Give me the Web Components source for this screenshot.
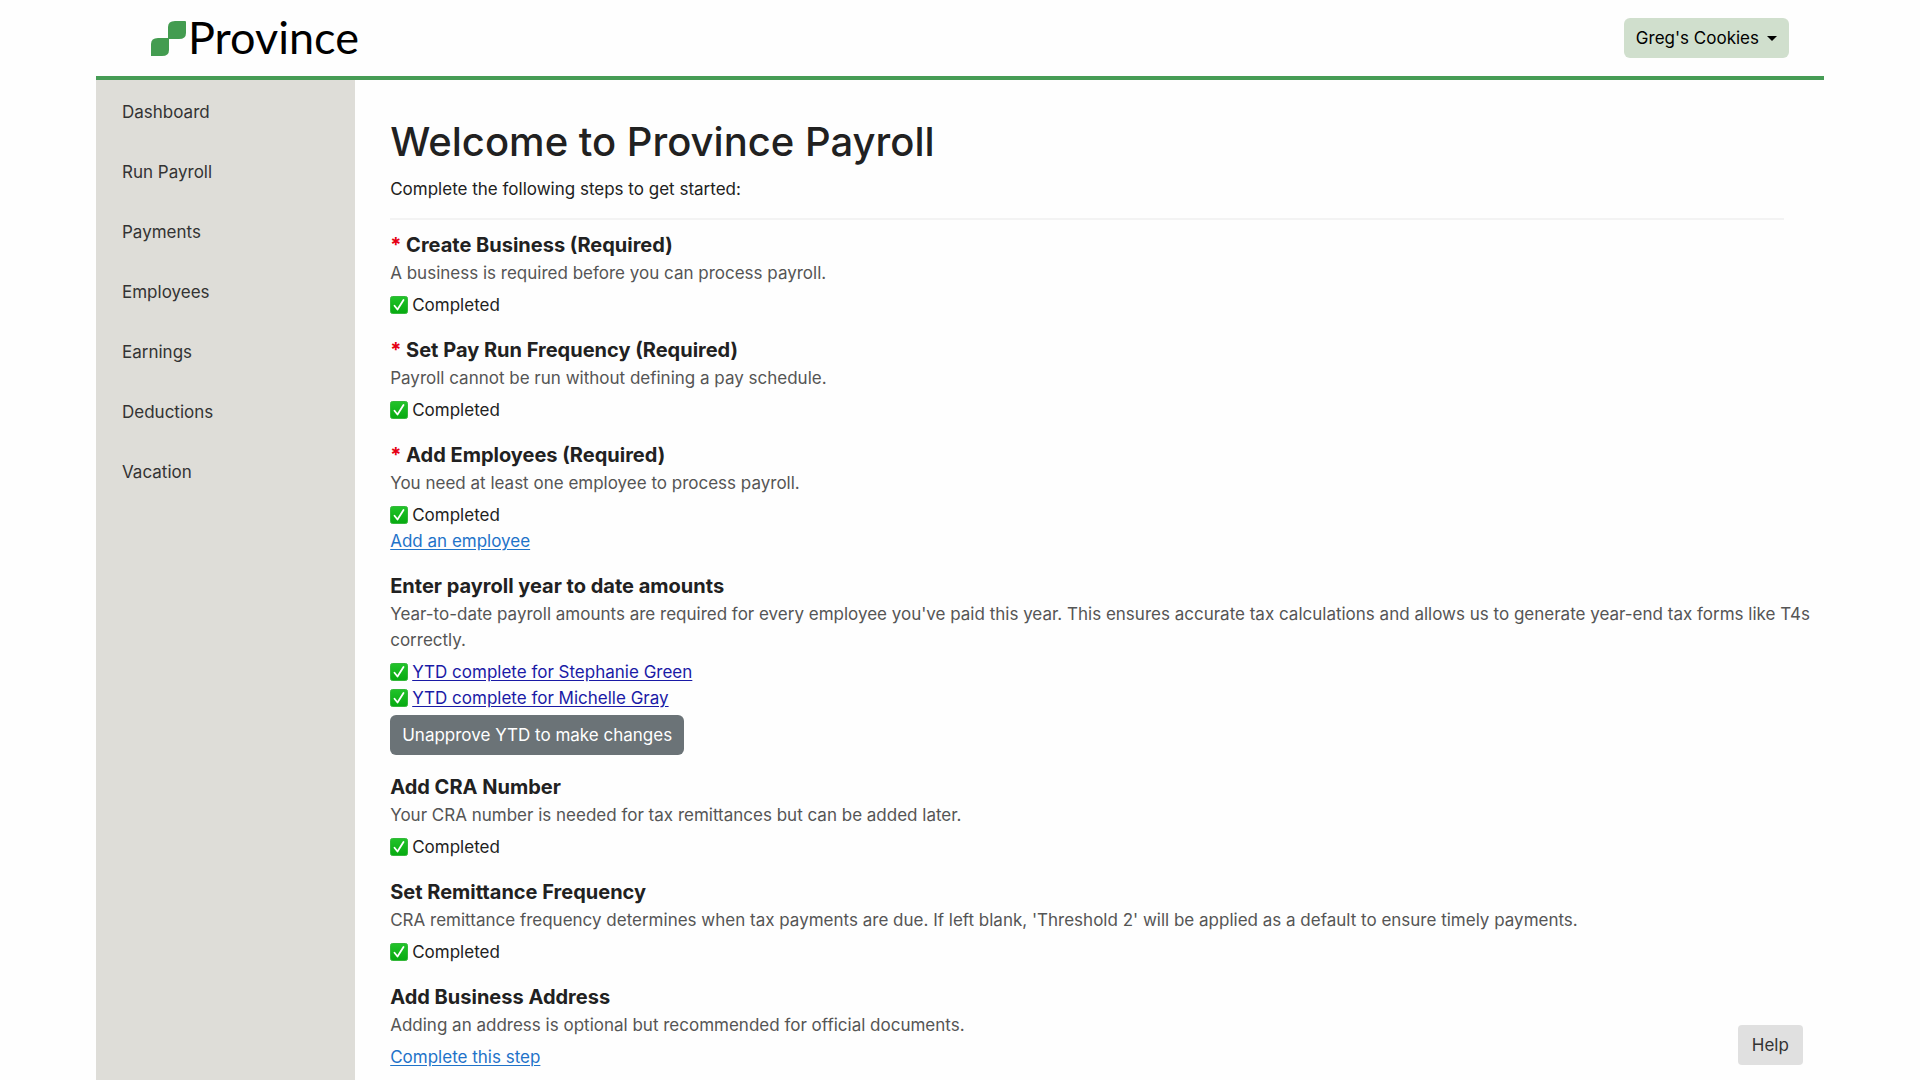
<!DOCTYPE html>
<html lang="en">
<head>
<meta charset="utf-8">
<meta name="viewport" content="width=device-width, initial-scale=1">
<title>Province Payroll</title>
<style>
  body {
    margin: 0;
    background: #fefefe;
    color: #212121;
    font-family: Inter, "Liberation Sans", sans-serif;
    font-size: 17px;
    line-height: 26px;
  }
</style>
</head>
<body>

<payroll-app>
  <app-header slot="header" account="Greg's Cookies"></app-header>
  <side-nav slot="nav">
    <nav-item href="#dashboard">Dashboard</nav-item>
    <nav-item href="#run">Run Payroll</nav-item>
    <nav-item href="#payments">Payments</nav-item>
    <nav-item href="#employees">Employees</nav-item>
    <nav-item href="#earnings">Earnings</nav-item>
    <nav-item href="#deductions">Deductions</nav-item>
    <nav-item href="#vacation">Vacation</nav-item>
  </side-nav>

  <page-intro>
    <span slot="title">Welcome to Province Payroll</span>
    Complete the following steps to get started:
  </page-intro>

  <setup-step heading="Create Business (Required)" required>
    <span slot="text">A business is required before you can process payroll.</span>
    <step-done>Completed</step-done>
  </setup-step>

  <setup-step heading="Set Pay Run Frequency (Required)" required>
    <span slot="text">Payroll cannot be run without defining a pay schedule.</span>
    <step-done>Completed</step-done>
  </setup-step>

  <setup-step heading="Add Employees (Required)" required>
    <span slot="text">You need at least one employee to process payroll.</span>
    <step-done>Completed</step-done>
    <text-link href="#add-employee">Add an employee</text-link>
  </setup-step>

  <setup-step heading="Enter payroll year to date amounts">
    <span slot="text">Year-to-date payroll amounts are required for every employee you've paid this year. This ensures accurate tax calculations and allows us to generate year-end tax forms like T4s correctly.</span>
    <step-done><text-link href="#ytd-1" seen>YTD complete for Stephanie Green</text-link></step-done>
    <step-done><text-link href="#ytd-2" seen>YTD complete for Michelle Gray</text-link></step-done>
    <app-button slot="action" kind="secondary">Unapprove YTD to make changes</app-button>
  </setup-step>

  <setup-step heading="Add CRA Number">
    <span slot="text">Your CRA number is needed for tax remittances but can be added later.</span>
    <step-done>Completed</step-done>
  </setup-step>

  <setup-step heading="Set Remittance Frequency">
    <span slot="text">CRA remittance frequency determines when tax payments are due. If left blank, 'Threshold 2' will be applied as a default to ensure timely payments.</span>
    <step-done>Completed</step-done>
  </setup-step>

  <setup-step heading="Add Business Address">
    <span slot="text">Adding an address is optional but recommended for official documents.</span>
    <text-link href="#address">Complete this step</text-link>
  </setup-step>

  <app-button slot="help" kind="help">Help</app-button>
</payroll-app>

<script>
function define(name, html, setup) {
  const tpl = document.createElement('template');
  tpl.innerHTML = html;

  customElements.define(name, class extends HTMLElement {
    constructor() {
      super();
      this.attachShadow({ mode: 'open' }).appendChild(tpl.content.cloneNode(true));
    }

    connectedCallback() {
      if (setup) setup(this, this.shadowRoot);
    }
  });
}

define('payroll-app', `
  <style>
    :host {
      display: flex;
      flex-direction: column;
      width: 90%;
      height: 100vh;
      margin: 0 auto;
    }

    .body {
      display: flex;
      flex: 1;
      min-height: 0;
    }

    aside {
      flex: 0 0 15%;
      background: #deddd8;
    }

    main {
      flex: 1;
      min-width: 0;
      overflow: hidden;
      padding: 36px 10px 0 35px;
    }

    /* stays in the corner over the step list */
    .help {
      position: fixed;
      right: 6.1%;
      bottom: 15px;
    }
  </style>

  <slot name="header"></slot>
  <div class="body">
    <aside><slot name="nav"></slot></aside>
    <main><slot></slot></main>
  </div>
  <div class="help"><slot name="help"></slot></div>
`);

define('app-header', `
  <style>
    :host {
      display: block;
      border-bottom: 4px solid #469c55;
    }

    header {
      display: flex;
      align-items: center;
      justify-content: space-between;
      height: 76px;
      padding: 0 35px 0 55px;
    }

    .logo {
      display: flex;
      align-items: center;
      gap: 2px;
      color: #000;
      font: 400 45px/46px Lato, "Liberation Sans", sans-serif;
      text-decoration: none;
    }

    .logo span { padding-bottom: 2px; }
  </style>

  <header>
    <a class="logo" href="#home">
      <svg width="35" height="35" viewBox="0 0 35 35" fill="#439c50" aria-hidden="true">
        <path d="M17 18V6Q17 0 24 0H34Q35 0 35 1V12Q35 18 28 18Z"/>
        <path d="M18 17V29Q18 35 11 35H0V23Q0 17 7 17Z"/>
      </svg>
      <span>Province</span>
    </a>
    <app-button kind="account" caret></app-button>
  </header>
`, (el, root) => {
  root.querySelector('app-button').textContent = el.getAttribute('account');
});

define('app-button', `
  <style>
    :host { display: inline-block; }

    button {
      display: flex;
      align-items: center;
      gap: 8px;
      padding: 7px 12px;
      border: 0;
      border-radius: 6px;
      font: inherit;
      cursor: pointer;
    }

    :host([kind="account"]) button { background: #d0dfcd; color: #000; }
    :host([kind="secondary"]) button { background: #6b7377; color: #fff; }
    :host([kind="help"]) button { background: #e0e0e0; color: #333; padding: 7px 14px; border-radius: 4px; }

    svg { display: none; }
    :host([caret]) svg { display: block; }
  </style>

  <button type="button">
    <slot></slot>
    <svg width="10" height="5" viewBox="0 0 10 5" aria-hidden="true"><path d="M0 0h10L5 5z"/></svg>
  </button>
`);

define('side-nav', `
  <style>
    :host { display: block; }

    nav {
      display: flex;
      flex-direction: column;
      gap: 8px;
      padding-top: 6px;
    }
  </style>
  <nav><slot></slot></nav>
`);

define('nav-item', `
  <style>
    :host { display: block; }

    a {
      display: block;
      padding: 13px 26px;
      color: #333;
      text-decoration: none;
    }
  </style>
  <a><slot></slot></a>
`, (el, root) => {
  root.querySelector('a').href = el.getAttribute('href');
});

define('page-intro', `
  <style>
    :host {
      display: block;
      margin: 0 30px 12px 0;
      padding-bottom: 16px;
      border-bottom: 2px solid #f3f3f3;
    }

    h1 {
      margin: 0 0 8px;
      font-size: 40px;
      font-weight: 500;
      line-height: 52px;
    }

    p { margin: 0; }
  </style>
  <h1><slot name="title"></slot></h1>
  <p><slot></slot></p>
`);

define('setup-step', `
  <style>
    :host {
      display: block;
      margin-bottom: 19px;
    }

    h2 {
      margin: 0 0 2px;
      font-size: 20px;
      font-weight: 700;
      line-height: 26px;
    }

    .star {
      display: none;
      color: #e60012;
    }

    :host([required]) .star { display: inline; }

    p {
      margin: 0 0 6px;
      color: #555;
    }

    .items {
      display: flex;
      flex-direction: column;
      align-items: flex-start;
    }

    ::slotted([slot="action"]) { margin-top: 4px; }
  </style>

  <h2><span class="star">* </span><span class="heading"></span></h2>
  <p><slot name="text"></slot></p>
  <div class="items">
    <slot></slot>
    <slot name="action"></slot>
  </div>
`, (el, root) => {
  root.querySelector('.heading').textContent = el.getAttribute('heading');
});

define('step-done', `
  <style>
    :host {
      display: flex;
      align-items: center;
      gap: 4px;
    }
  </style>

  <svg width="18" height="18" viewBox="0 0 18 18" role="img" aria-label="Done">
    <defs>
      <linearGradient id="g" x1="0" y1="0" x2="0" y2="1">
        <stop offset="0" stop-color="#22c32a"/>
        <stop offset="1" stop-color="#06aa10"/>
      </linearGradient>
    </defs>
    <rect x=".5" y=".5" width="17" height="17" rx="2" fill="url(#g)" stroke="#35b83b"/>
    <path d="M4.500 9.800l3 3.700L13.500 4" fill="none" stroke="#fff" stroke-width="1.800" stroke-linecap="round" stroke-linejoin="round"/>
  </svg>
  <span><slot></slot></span>
`);

define('text-link', `
  <style>
    :host { display: inline; }

    a {
      color: #1f73c9;
      text-underline-offset: 2px;
    }

    :host([seen]) a { color: #1a1aa6; }
  </style>
  <a><slot></slot></a>
`, (el, root) => {
  root.querySelector('a').href = el.getAttribute('href');
});
</script>
</body>
</html>
